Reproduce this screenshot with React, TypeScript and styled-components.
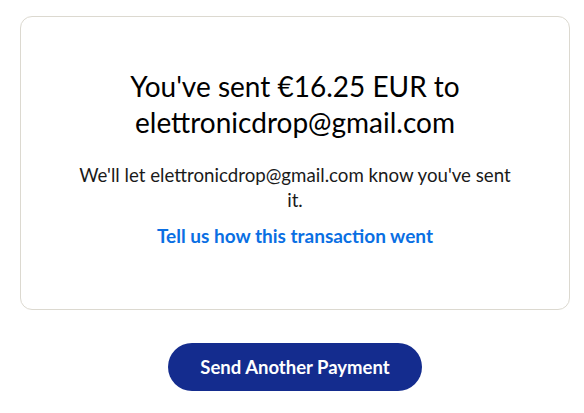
import styled, { createGlobalStyle } from "styled-components";

const GlobalStyle = createGlobalStyle`
  body {
    margin: 0;
    background: #ffffff;
    font-family: Lato, "Noto Sans", sans-serif;
  }
`;

const Page = styled.div`
  display: flex;
  flex-direction: column;
  align-items: center;
  padding: 16px 14px 0 20px;
`;

const Card = styled.div`
  box-sizing: border-box;
  width: 100%;
  border: 1px solid #dcd9d0;
  border-radius: 12px;
  padding: 51px 40px 61px;
  display: flex;
  flex-direction: column;
  align-items: center;
  text-align: center;
`;

const Title = styled.h1`
  margin: 0;
  font-weight: 400;
  font-size: 28px;
  line-height: 36px;
  color: #000000;
  max-width: 360px;
`;

const Message = styled.p`
  margin: 23px 0 0;
  font-size: 18.7px;
  line-height: 25px;
  color: #1a1a1a;
  max-width: 440px;
`;

const FeedbackLink = styled.a`
  margin-top: 11px;
  font-size: 19px;
  line-height: 24px;
  font-weight: 700;
  color: #0a6fe3;
  text-decoration: none;
  cursor: pointer;
`;

const PrimaryButton = styled.button`
  margin-top: 33px;
  height: 48px;
  padding: 0 32px;
  border: none;
  border-radius: 24px;
  background: #142c8e;
  color: #ffffff;
  font-family: Lato, "Noto Sans", sans-serif;
  font-size: 18.5px;
  font-weight: 700;
  cursor: pointer;
`;

export default function App() {
  return (
    <>
      <GlobalStyle />
      <Page>
        <Card>
          <Title>You've sent €16.25 EUR to elettronicdrop@gmail.com</Title>
          <Message>We'll let elettronicdrop@gmail.com know you've sent it.</Message>
          <FeedbackLink>Tell us how this transaction went</FeedbackLink>
        </Card>
        <PrimaryButton>Send Another Payment</PrimaryButton>
      </Page>
    </>
  );
}
